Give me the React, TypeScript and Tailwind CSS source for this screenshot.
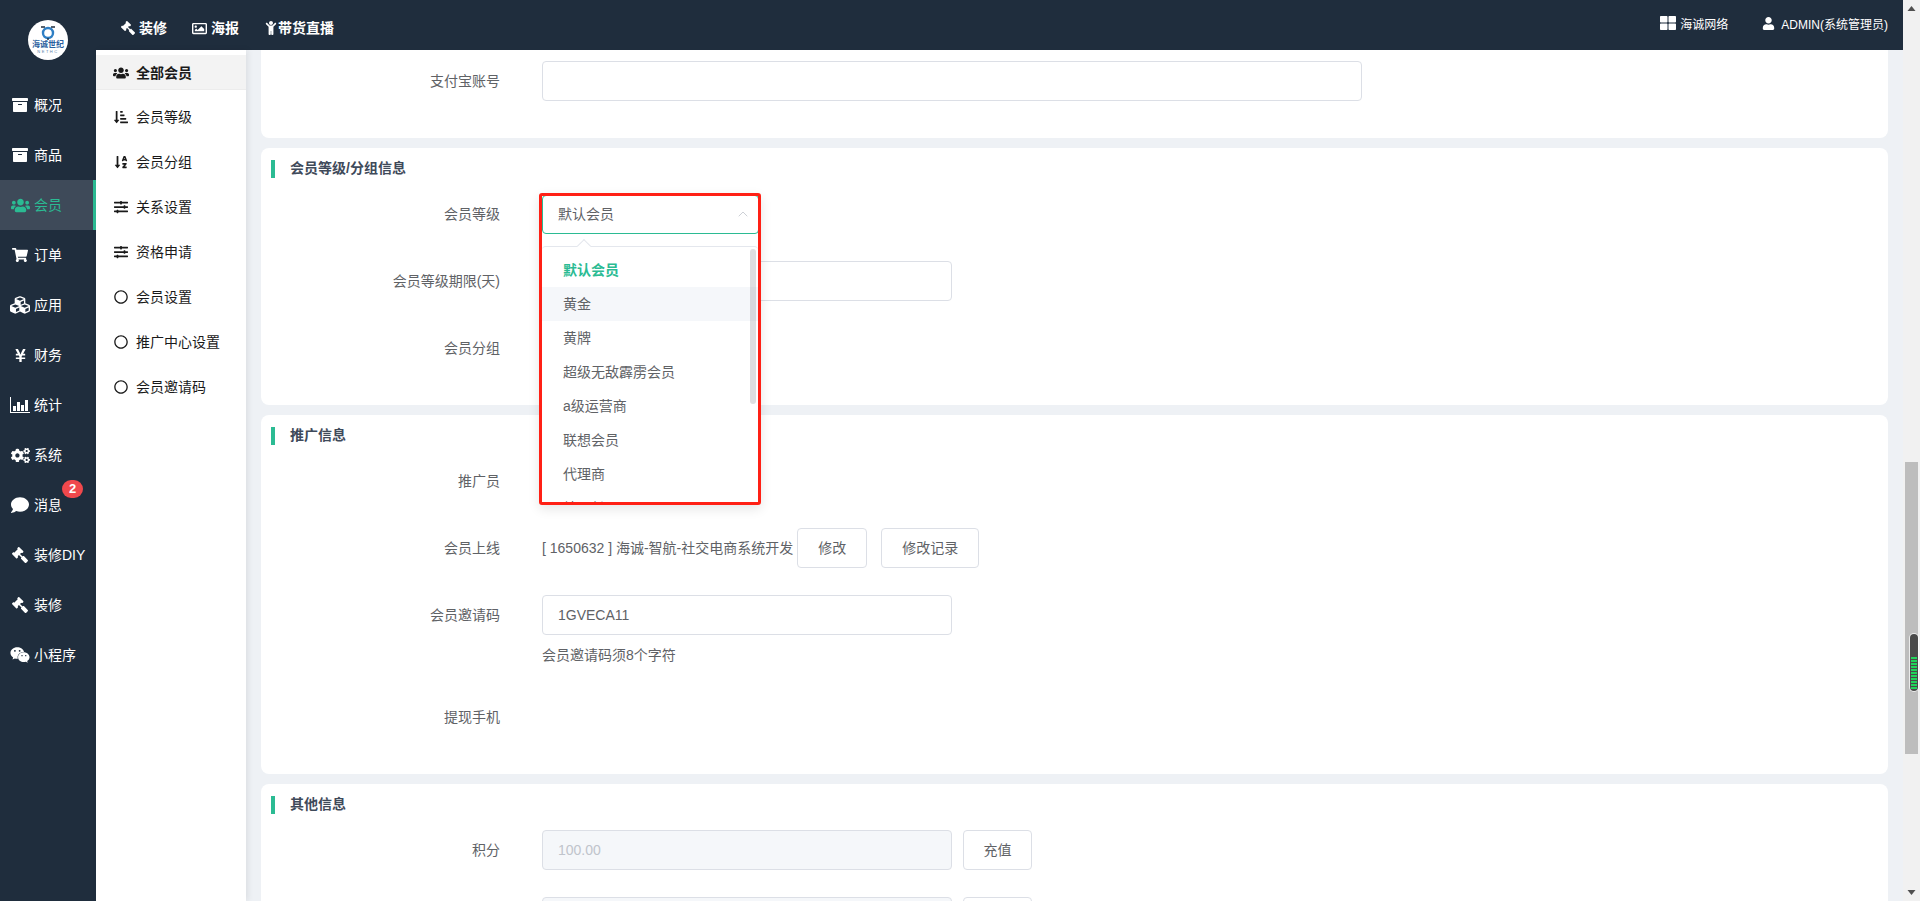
import { FaArchive, FaChild, FaCogs, FaComment, FaCubes, FaGavel, FaRegCircle, FaRegImage, FaShoppingCart, FaSlidersH, FaSortAlphaDown, FaSortAmountDownAlt, FaThLarge, FaUser, FaUsers, FaWeixin, FaYenSign } from "react-icons/fa";
import { ChevronUp } from "lucide-react";

const font = "font-['Liberation_Sans','Noto_Sans_CJK_SC',sans-serif]";

const Gavel = ({ size = 16 }: { size?: number }) => <FaGavel size={size} className="-scale-x-100" />;

const BarChart = () => (
  <svg width="20" height="16" viewBox="0 0 20 16" fill="currentColor">
    <path d="M0 0h1v15h19v1H0z" />
    <path d="M3 9h3v5H3zM7 5h3v9H7zM11 8h3v6h-3zM15 3h3v11h-3z" />
  </svg>
);

const sideItems = [
  { icon: () => <FaArchive size={16} />, label: "概况" },
  { icon: () => <FaArchive size={16} />, label: "商品" },
  { icon: () => <FaUsers size={19} />, label: "会员", active: true },
  { icon: () => <FaShoppingCart size={16} />, label: "订单" },
  { icon: () => <FaCubes size={20} />, label: "应用" },
  { icon: () => <FaYenSign size={15} />, label: "财务" },
  { icon: BarChart, label: "统计" },
  { icon: () => <FaCogs size={19} />, label: "系统" },
  { icon: () => <FaComment size={18} />, label: "消息", badge: 2 },
  { icon: () => <Gavel />, label: "装修DIY" },
  { icon: () => <Gavel />, label: "装修" },
  { icon: () => <FaWeixin size={20} />, label: "小程序" },
];

const subItems = [
  { icon: FaSortAmountDownAlt, label: "会员等级" },
  { icon: FaSortAlphaDown, label: "会员分组" },
  { icon: FaSlidersH, label: "关系设置" },
  { icon: FaSlidersH, label: "资格申请" },
  { icon: FaRegCircle, label: "会员设置" },
  { icon: FaRegCircle, label: "推广中心设置" },
  { icon: FaRegCircle, label: "会员邀请码" },
];

const options = ["黄金", "黄牌", "超级无敌霹雳会员", "a级运营商", "联想会员", "代理商", "特团长"];

const Logo = () => (
  <div className="w-10 h-10 rounded-full bg-white flex flex-col items-center overflow-hidden">
    <svg width="16" height="15" viewBox="0 0 16 15" className="mt-[5px]">
      <circle cx="8" cy="8" r="5" fill="none" stroke="#2f7fc4" strokeWidth="2.4" />
      <path d="M1 2h4M11 2h4M8 13v2" stroke="#1f2d3d" strokeWidth="1.4" />
    </svg>
    <span className="text-[8px] leading-[9px] font-bold text-[#2a5f9e] whitespace-nowrap">海诚世纪</span>
    <span className="text-[4px] leading-[5px] tracking-[1.5px] text-[#5a7fa8]">NETHC</span>
  </div>
);

const Sidebar = () => (
  <aside className="w-24 shrink-0 bg-[#1f2d3d] flex flex-col">
    <div className="h-20 flex items-center justify-center">
      <Logo />
    </div>
    {sideItems.map((item) => (
      <div
        key={item.label}
        className={`relative h-[50px] flex items-center text-sm ${item.active ? "bg-[#3e4a59] text-[#2bbb93] border-r-[3px] border-[#2bbb93]" : "text-white"}`}
      >
        <span className="w-[34px] flex justify-center pl-[6px] shrink-0">
          <item.icon />
        </span>
        <span className="whitespace-nowrap">{item.label}</span>
        {item.badge && (
          <span className="absolute left-[62px] top-0 w-[21px] h-[18px] rounded-full bg-[#f0484c] text-white text-[13px] font-bold flex items-center justify-center">
            {item.badge}
          </span>
        )}
      </div>
    ))}
  </aside>
);

const TopBar = () => (
  <header className="h-[50px] shrink-0 bg-[#1f2d3d] text-white flex items-center justify-between pl-[25px] pr-[15px]">
    <div className="flex items-center gap-[25px] pt-[6px] text-sm font-bold">
      <span className="flex items-center gap-1"><Gavel size={14} />装修</span>
      <span className="flex items-center gap-1"><FaRegImage size={15} />海报</span>
      <span className="flex items-center"><FaChild size={14} />带货直播</span>
    </div>
    <div className="flex items-center gap-[34px] text-xs">
      <span className="flex items-center gap-[4px]"><FaThLarge size={16} className="mb-1" />海诚网络</span>
      <span className="flex items-center gap-[6px]"><FaUser size={13} className="mb-1" />ADMIN(系统管理员)</span>
    </div>
  </header>
);

const SubNav = () => (
  <nav className="w-[150px] shrink-0 bg-white pt-[5px] shadow-[2px_0_6px_rgba(0,0,0,0.08)] z-10 text-sm text-[#1a1a1a]">
    <div className="h-[35px] mb-1 pt-px flex items-center pl-[17px] gap-[7px] bg-[#f3f3f3] border-b border-[#ececec] font-bold">
      <FaUsers size={16} />
      全部会员
    </div>
    {subItems.map((item) => (
      <div key={item.label} className="h-[45px] flex items-center pl-[18px] gap-[8px] whitespace-nowrap">
        <item.icon size={14} />
        {item.label}
      </div>
    ))}
  </nav>
);

const Card = ({ title, children, first }: { title?: string; children: React.ReactNode; first?: boolean }) => (
  <section className={`bg-white mb-[10px] ${first ? "rounded-b-lg pt-[11px] pb-[37px]" : "rounded-lg pt-3 pb-[37px]"}`}>
    {title && (
      <h3 className="h-[18px] mb-4 ml-[10px] pl-[15px] border-l-4 border-[#2bbb93] text-sm font-bold leading-4 text-[#3f4a5a]">
        {title}
      </h3>
    )}
    <div className="flex flex-col gap-[27px]">{children}</div>
  </section>
);

const Row = ({ label, children }: { label?: string; children?: React.ReactNode }) => (
  <div className="relative h-10 flex items-center text-sm text-[#606266]">
    <label className="w-[239px] shrink-0 text-right mr-[42px] whitespace-nowrap">{label}</label>
    {children}
  </div>
);

const Input = ({ value = "", wide, disabled }: { value?: string; wide?: boolean; disabled?: boolean }) => (
  <div
    className={`h-10 rounded border border-[#dcdfe6] px-[15px] flex items-center ${wide ? "w-[820px]" : "w-[410px]"} ${disabled ? "bg-[#f5f7fa] text-[#c0c4cc]" : "bg-white"}`}
  >
    {value}
  </div>
);

const Btn = ({ children, className = "" }: { children?: React.ReactNode; className?: string }) => (
  <button className={`h-10 rounded border border-[#dcdfe6] bg-white text-sm text-[#606266] ${className}`}>{children}</button>
);

const Dropdown = () => (
  <div className="absolute left-[278px] top-[-1px] w-[222px] h-[312px] border-[3px] border-[#ff2015] rounded-[3px] z-20 overflow-hidden bg-white shadow-[0_4px_12px_rgba(0,0,0,0.1)]">
    <div className="h-[39px] -mt-px -mr-px pb-[2px] rounded border border-[#2bbb93] pl-[15px] pr-[7px] flex items-center justify-between text-sm text-[#606266] bg-white">
      默认会员
      <ChevronUp size={16} strokeWidth={1.2} className="text-[#c0c4cc]" />
    </div>
    <div className="relative mt-[12px] h-[270px] border-t border-[#e4e7ed] rounded-t pt-[6px] text-sm text-[#606266]">
      <span className="absolute left-[37px] top-[-6px] w-[10px] h-[10px] rotate-45 bg-white border-l border-t border-[#e4e7ed]" />
      <div className="h-[34px] pl-[21px] flex items-center font-bold text-[#2bbb93]">默认会员</div>
      {options.map((option, i) => (
        <div key={option} className={`h-[34px] pl-[21px] flex items-center ${i === 0 ? "bg-[#f5f7fa]" : ""}`}>
          {option}
        </div>
      ))}
      <span className="absolute right-[2px] top-[2px] w-[6px] h-[155px] rounded-full bg-[#909399]/30" />
    </div>
  </div>
);

const Scrollbar = () => (
  <div className="relative w-[17px] shrink-0 bg-[#f1f1f1] flex flex-col justify-between">
    <svg width="17" height="17" viewBox="0 0 17 17" className="block">
      <path d="M8.5 6 L12.5 11 H4.5 Z" fill="#505050" />
    </svg>
    <svg width="17" height="17" viewBox="0 0 17 17" className="block">
      <path d="M8.5 11 L12.5 6 H4.5 Z" fill="#505050" />
    </svg>
    <div className="absolute left-[2px] top-[462px] w-[13px] h-[292px] bg-[#bdbdbd]" />
    <div className="absolute left-[7px] top-[634px] w-[8px] h-[57px] rounded-[4px] bg-[#4a4a4a] ring-1 ring-white/70 flex flex-col justify-end items-center gap-px pb-[2px]">
      {Array.from({ length: 11 }).map((_, i) => (
        <span key={i} className="w-[6px] h-[2px] bg-[#22d45a]" />
      ))}
    </div>
  </div>
);

export default function App() {
  return (
    <div className={`w-[1920px] h-[901px] flex overflow-hidden bg-[#eef1f5] ${font}`}>
      <Sidebar />
      <div className="flex-1 flex flex-col min-w-0">
        <TopBar />
        <div className="flex-1 flex min-h-0">
          <SubNav />
          <main className="flex-1 px-[15px] overflow-hidden">
            <Card first>
              <Row label="支付宝账号">
                <Input wide />
              </Row>
            </Card>
            <Card title="会员等级/分组信息">
              <Row label="会员等级">
                <Dropdown />
              </Row>
              <Row label="会员等级期限(天)">
                <Input />
              </Row>
              <Row label="会员分组" />
            </Card>
            <Card title="推广信息">
              <Row label="推广员" />
              <Row label="会员上线">
                <span className="whitespace-nowrap">[ 1650632 ] 海诚-智航-社交电商系统开发</span>
                <Btn className="w-[70px] ml-[4px]">修改</Btn>
                <Btn className="w-[98px] ml-[14px]">修改记录</Btn>
              </Row>
              <div>
                <Row label="会员邀请码">
                  <Input value="1GVECA11" />
                </Row>
                <p className="h-[35px] pt-[10px] pl-[281px] text-sm leading-5 text-[#606266]">会员邀请码须8个字符</p>
                <div className="h-[27px]" />
                <Row label="提现手机" />
              </div>
            </Card>
            <Card title="其他信息">
              <Row label="积分">
                <Input value="100.00" disabled />
                <Btn className="w-[69px] ml-[11px]">充值</Btn>
              </Row>
              <Row>
                <Input disabled />
                <Btn className="w-[69px] ml-[11px]" />
              </Row>
            </Card>
          </main>
        </div>
      </div>
      <Scrollbar />
    </div>
  );
}
